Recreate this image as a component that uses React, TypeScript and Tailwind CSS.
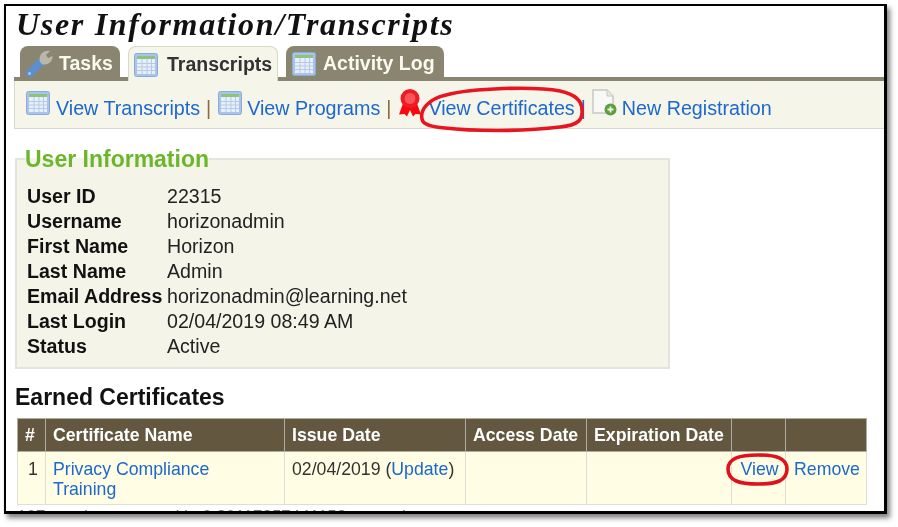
const sans = "font-['Liberation_Sans',Arial,sans-serif]";

function TableIcon({ className = "" }: { className?: string }) {
  return (
    <svg width="24" height="24" viewBox="0 0 24 24" className={`shrink-0 ${className}`}>
      <rect x="0.5" y="0.5" width="23" height="23" rx="2" fill="#a9c4e8" stroke="#8aacdb" />
      <rect x="3" y="3" width="18" height="3" fill="#8cc47e" />
      <rect x="3" y="6" width="18" height="15" fill="#e8eff9" />
      <path d="M3 10.5H21M3 14H21M3 17.5H21M8 6V21M13 6V21M17.5 6V21" stroke="#b4cae8" strokeWidth="1" fill="none" />
    </svg>
  );
}

function Wrench() {
  return (
    <svg width="28" height="30" viewBox="0 0 28 30" className="shrink-0">
      <path d="M5 24 L18 11" stroke="#5d8fd0" strokeWidth="8" strokeLinecap="round" fill="none" />
      <path d="M15 13 C13 6 18 1 25 2 L21 6 L23 9 L27.5 7 C28 13 22 17 17 15 Z" fill="#b9b7a9" />
      <circle cx="4.5" cy="24.5" r="1.5" fill="#a9c6ea" />
    </svg>
  );
}

function Ribbon() {
  return (
    <svg width="22" height="28" viewBox="0 0 22 28" className="block">
      <path d="M4.5 13 L0 25.5 L5.5 25 L8 27.5 L11 21 L14 27.5 L16.5 25 L22 25.5 L17.5 13 Z" fill="#f70a0f" />
      <circle cx="11" cy="9.5" r="9.5" fill="#f01c23" />
      <circle cx="11" cy="9.5" r="6" fill="#f8555a" stroke="#e8181f" />
    </svg>
  );
}

function NewDoc() {
  return (
    <svg width="25" height="27" viewBox="0 0 25 27" className="block">
      <path d="M1 1H15L21 7V24H1Z" fill="#f8f8f6" stroke="#c8c8c4" strokeWidth="1.5" />
      <path d="M15 1V7H21" fill="#e8e8e4" stroke="#c8c8c4" />
      <circle cx="18.5" cy="20.5" r="6" fill="#5f9e3e" />
      <path d="M15.5 20.5H21.5M18.5 17.5V23.5" stroke="#e9f5e0" strokeWidth="1.8" />
    </svg>
  );
}

function Sep({ blue = false }: { blue?: boolean }) {
  return <span className={`mx-[6px] ${blue ? "text-[#1c68cc]" : "text-[#8a6a3a]"}`}>|</span>;
}

const info: [string, string][] = [
  ["User ID", "22315"],
  ["Username", "horizonadmin"],
  ["First Name", "Horizon"],
  ["Last Name", "Admin"],
  ["Email Address", "horizonadmin@learning.net"],
  ["Last Login", "02/04/2019 08:49 AM"],
  ["Status", "Active"],
];

const heads: [string, string][] = [
  ["#", "w-[28px] text-center"],
  ["Certificate Name", "w-[239px]"],
  ["Issue Date", "w-[181px]"],
  ["Access Date", "w-[121px]"],
  ["Expiration Date", "w-[145px]"],
  ["", "w-[54px]"],
  ["", "w-[81px]"],
];

export default function App() {
  return (
    <div className={`relative w-[898px] h-[527px] bg-white overflow-hidden ${sans}`}>
      <div className="relative ml-[4px] mt-[4px] w-[883px] h-[510px] border-t-[2px] border-l-[2px] border-r-[3px] border-b-[3px] border-black bg-white shadow-[3px_4px_5px_rgba(0,0,0,0.5)]">
        <div className="h-full overflow-hidden">
          <div className="pl-[8px] blur-[0.4px]">
            <h1 className="font-['Liberation_Serif',serif] italic font-bold text-[32px] leading-[34px] tracking-[1.7px] text-[#111] pl-[2px] pt-[1px] h-[34px]">
              User Information/Transcripts
            </h1>
            <div className="flex items-end gap-[8px] pl-[6px] mt-[6px] h-[35px]">
              <div className="flex items-center gap-[6px] w-[100px] h-[31px] mb-[4px] pt-[4px] pl-[5px] rounded-t-[8px] bg-[#8a8570] text-[#fafaf0] font-bold text-[19.5px]">
                <Wrench />
                <span>Tasks</span>
              </div>
              <div className="flex items-center gap-[9px] w-[150px] h-[35px] pt-[1px] pl-[5px] rounded-t-[8px] border border-b-0 border-[#d9d9c4] bg-[#f5f5ea] text-[#333] font-bold text-[19.5px] relative z-10">
                <TableIcon />
                <span>Transcripts</span>
              </div>
              <div className="flex items-center gap-[7px] w-[158px] h-[31px] mb-[4px] pt-[4px] pl-[6px] rounded-t-[8px] bg-[#8a8570] text-[#fafaf0] font-bold text-[19.5px]">
                <TableIcon />
                <span>Activity Log</span>
              </div>
            </div>
            <div className="-mt-[4px] h-[4px] bg-[#8a8570]" />
            <div className="flex items-center h-[48px] pt-[8px] pl-[11px] bg-[#f5f5ea] border-b border-l border-[#d8d8d0] text-[19.7px] text-[#1c68cc]">
              <TableIcon className="mb-[12px]" />
              <span className="ml-[6px]">View Transcripts</span>
              <Sep />
              <TableIcon className="mb-[12px] ml-[1px]" />
              <span className="ml-[5px]">View Programs</span>
              <Sep />
              <span className="mb-[12px] ml-[2px]"><Ribbon /></span>
              <span className="ml-[7px]">View Certificates</span>
              <Sep blue />
              <span className="mb-[12px]"><NewDoc /></span>
              <span className="ml-[5px]">New Registration</span>
            </div>

            <fieldset className="mt-[18px] ml-[1px] w-[655px] h-[222px] border-[2px] border-[#e4e4de] bg-[#f5f4e9] pl-[10px] pt-[13px]">
              <legend className="-ml-[2px] px-0 text-[23px] leading-[24px] font-bold text-[#6cb62c]">User Information</legend>
              <div className="grid grid-cols-[140px_1fr] text-[19.6px] leading-[25px] text-[#222]">
                {info.map(([k, v]) => (
                  <div key={k} className="contents">
                    <div className="font-bold text-[#111] whitespace-nowrap">{k}</div>
                    <div>{v}</div>
                  </div>
                ))}
              </div>
            </fieldset>

            <h2 className="mt-[13px] ml-[1px] text-[23px] leading-[30px] font-bold text-[#111]">Earned Certificates</h2>
            <table className="mt-[6px] ml-[3px] w-[849px] table-fixed border-collapse text-[17.7px] leading-[20px]">
              <thead>
                <tr className="h-[33px] bg-[#635740] text-white font-bold">
                  {heads.map(([h, c], i) => (
                    <th key={i} className={`${c} border border-[#b0aca0] px-[7px] text-left font-bold whitespace-nowrap`}>{h}</th>
                  ))}
                </tr>
              </thead>
              <tbody>
                <tr className="h-[53px] bg-[#fffde3] text-[#333] align-top">
                  <td className="border border-[#dfdfd8] pt-[7px] pl-[3px] text-center">1</td>
                  <td className="border border-[#dfdfd8] pt-[7px] px-[7px] text-[#1c68cc]">Privacy Compliance Training</td>
                  <td className="border border-[#dfdfd8] pt-[7px] px-[7px] whitespace-nowrap">02/04/2019 (<span className="text-[#1c68cc]">Update</span>)</td>
                  <td className="border border-[#dfdfd8]" />
                  <td className="border border-[#dfdfd8]" />
                  <td className="border border-[#dfdfd8] pt-[7px] pl-[2px] text-center text-[#1c68cc]">View</td>
                  <td className="border border-[#dfdfd8] pt-[7px] pl-[2px] text-center text-[#1c68cc]">Remove</td>
                </tr>
              </tbody>
            </table>
            <div className="mt-[2px] pl-[3px] text-[17px] leading-[20px] text-[#777] whitespace-nowrap">107 queries executed in 0.30117857441152 seconds</div>
          </div>
        </div>
      </div>

      <svg className="absolute left-0 top-0 pointer-events-none" width="898" height="527" viewBox="0 0 898 527" fill="none">
        <path d="M422 119 C420 110 428 99 446 95 C472 88 535 86 560 91 C574 94 582 100 582 110 C583 120 578 125 560 127 C520 132 470 131 445 128 C432 127 423 125 422 119 Z" stroke="#e8141f" strokeWidth="3.6" />
        <path d="M728 469 C728 458 740 455 758 455 C776 455 787 458 787 469 C787 481 776 484 758 484 C740 484 728 481 728 469 Z" stroke="#e0101c" strokeWidth="3.6" />
      </svg>
    </div>
  );
}
